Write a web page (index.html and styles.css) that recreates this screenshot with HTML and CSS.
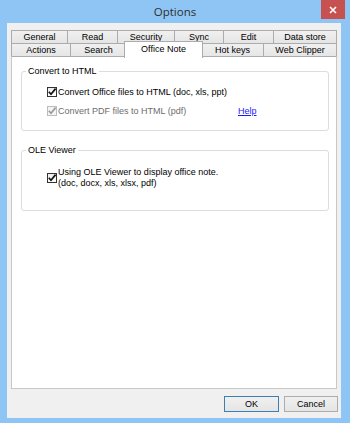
FILE: index.html
```html
<!DOCTYPE html>
<html>
<head>
<meta charset="utf-8">
<title>Options</title>
<link rel="stylesheet" href="styles.css">
</head>
<body>
<div class="window">
  <div class="titlebar">
    <span></span>
    <div class="title">Options</div>
    <div class="close"><svg width="8" height="8" viewBox="0 0 8 8"><path d="M1 1 L7 7 M7 1 L1 7" stroke="#fff" stroke-width="1.6" fill="none"/></svg></div>
  </div>
  <div class="client">
    <div class="tabs">
      <div class="tabrow back">
        <div class="tab">General</div>
        <div class="tab">Read</div>
        <div class="tab">Security</div>
        <div class="tab">Sync</div>
        <div class="tab">Edit</div>
        <div class="tab">Data store</div>
      </div>
      <div class="tabrow front">
        <div class="tab">Actions</div>
        <div class="tab">Search</div>
        <div class="tab selected">Office Note</div>
        <div class="tab">Hot keys</div>
        <div class="tab">Web Clipper</div>
      </div>
    </div>
    <div class="panel">
      <fieldset class="group">
        <legend>Convert to HTML</legend>
        <div class="option">
          <span class="cb"><svg width="10" height="10" viewBox="0 0 10 10"><path d="M1.8 4.8 L4 7.3 L8.6 1.6" stroke="#111" stroke-width="1.7" fill="none"/></svg></span>
          <span>Convert Office files to HTML (doc, xls, ppt)</span>
        </div>
        <div class="option-grid">
          <div class="option disabled">
            <span class="cb"><svg width="10" height="10" viewBox="0 0 10 10"><path d="M1.8 4.8 L4 7.3 L8.6 1.6" stroke="#9a9a9a" stroke-width="1.7" fill="none"/></svg></span>
            <span>Convert PDF files to HTML (pdf)</span>
          </div>
          <a class="help" href="#">Help</a>
        </div>
      </fieldset>
      <fieldset class="group ole">
        <legend>OLE Viewer</legend>
        <div class="option multi">
          <span class="cb"><svg width="10" height="10" viewBox="0 0 10 10"><path d="M1.8 4.8 L4 7.3 L8.6 1.6" stroke="#111" stroke-width="1.7" fill="none"/></svg></span>
          <span>Using OLE Viewer to display office note.<br>(doc, docx, xls, xlsx, pdf)</span>
        </div>
      </fieldset>
    </div>
    <div class="footer">
      <button class="btn default">OK</button>
      <button class="btn cancel">Cancel</button>
    </div>
  </div>
</div>
</body>
</html>
```
FILE: styles.css
```css
html, body {
  margin: 0;
  padding: 0;
}
body {
  width: 350px;
  height: 423px;
  overflow: hidden;
  font-family: "Liberation Sans", Arial, sans-serif;
  font-size: 9px;
  color: #000;
}
.window {
  width: 350px;
  height: 423px;
  background: #8ec5f5;
  display: flex;
  flex-direction: column;
  box-sizing: border-box;
}
.titlebar {
  height: 23px;
  display: grid;
  grid-template-columns: 1fr auto 1fr;
  align-items: start;
}
.title {
  font-family: "Open Sans", "Noto Sans", sans-serif;
  font-size: 11.5px;
  line-height: 23px;
  color: #2e2e2e;
}
.close {
  justify-self: end;
  margin-right: 5px;
  width: 24px;
  height: 19px;
  background: #c75050;
  display: flex;
  align-items: center;
  justify-content: center;
}
.client {
  margin: 0 9px 5px 7px;
  height: 395px;
  box-sizing: border-box;
  background: #f0f0f0;
  padding: 7px 4px 6px 4px;
  display: flex;
  flex-direction: column;
}
.tabs {
  display: flex;
  flex-direction: column;
}
.tabrow {
  display: grid;
  height: 13px;
}
.back {
  grid-template-columns: 56px 50px 57px 49px 50px 64px;
}
.front {
  grid-template-columns: 59px 56px 75px 62px 74px;
}
.tab {
  border-top: 1px solid #acacac;
  border-left: 1px solid #acacac;
  background: linear-gradient(#f0f0f0, #e5e5e5);
  text-align: center;
  line-height: 12px;
  white-space: nowrap;
}
.tab:last-child {
  border-right: 1px solid #acacac;
}
.tab.selected {
  background: #fff;
  border-right: 1px solid #acacac;
  margin: -2px -2px -1px -2px;
  padding-bottom: 2px;
  line-height: 14px;
  position: relative;
  z-index: 1;
}
.panel {
  height: 333px;
  box-sizing: border-box;
  background: #fff;
  border: 1px solid #c8c8c8;
  border-top-color: #acacac;
  padding: 9px 7px 0 9px;
}
.group {
  margin: 0;
  border: 1px solid #dcdcdc;
  border-radius: 3px;
  padding: 6px 8px 10px 0;
  min-width: 0;
}
.group legend {
  padding: 0 2px;
  margin-left: 4px;
  line-height: 10px;
}
.group.ole {
  margin-top: 14px;
  padding-top: 12px;
  padding-bottom: 21px;
}
.option {
  display: flex;
  align-items: center;
  gap: 1px;
  height: 19px;
  padding-left: 25px;
  white-space: nowrap;
}
.option.multi {
  height: auto;
  line-height: 11px;
}
.option-grid {
  display: grid;
  grid-template-columns: 216px auto;
  align-items: center;
}
.cb {
  width: 10px;
  height: 10px;
  box-sizing: border-box;
  border: 1px solid #333;
  background: linear-gradient(#ececec, #fff);
  display: flex;
  align-items: center;
  justify-content: center;
  flex: none;
}
.cb svg {
  display: block;
  margin: -1px;
}
.disabled {
  color: #6d6d6d;
}
.disabled .cb {
  border-color: #bcbcbc;
  background: #f4f4f4;
}
.help {
  color: #1a1aff;
  text-decoration: underline;
}
.footer {
  margin-top: 7px;
  margin-right: -1px;
  display: flex;
  justify-content: flex-end;
  gap: 5px;
}
.btn {
  font-family: "Liberation Sans", Arial, sans-serif;
  font-size: 9px;
  height: 16px;
  padding: 0;
  margin: 0;
  border: 1px solid #acacac;
  background: linear-gradient(#f0f0f0, #e5e5e5);
  color: #000;
  line-height: 14px;
}
.btn.default {
  width: 55px;
  border-color: #3c7fb1;
}
.btn.cancel {
  width: 54px;
}
```
